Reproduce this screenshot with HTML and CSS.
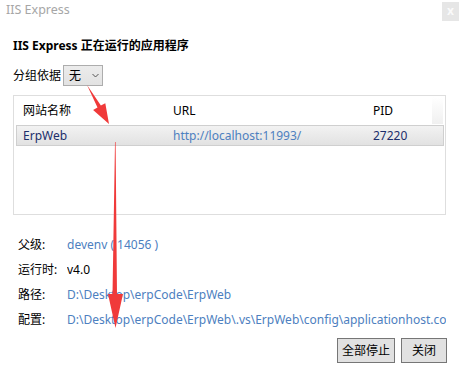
FILE: index.html
```html
<!DOCTYPE html>
<html>
<head>
<meta charset="utf-8">
<link rel="stylesheet" href="styles.css">
</head>
<body>
<div class="window">
  <div class="titlebar">
    <span class="title">IIS Express</span>
    <span class="close">x</span>
  </div>
  <div class="content">
    <h1 class="heading">IIS Express 正在运行的应用程序</h1>
    <div class="group-row">
      <span class="group-label">分组依据</span>
      <span class="select"><span class="select-value">无</span><svg class="chev" width="7" height="5" viewBox="0 0 7 5"><path d="M0.5 1 L3.5 4 L6.5 1" fill="none" stroke="#555" stroke-width="1"/></svg></span>
    </div>
    <div class="listbox">
      <div class="list-head">
        <span class="col col-name">网站名称</span>
        <span class="col col-url">URL</span>
        <span class="col col-pid">PID</span>
        <span class="head-filler"></span>
      </div>
      <div class="list-row selected">
        <span class="col col-name">ErpWeb</span>
        <span class="col col-url link">http://localhost:11993/</span>
        <span class="col col-pid">27220</span>
      </div>
    </div>
    <div class="info">
      <span class="label">父级:</span><span class="value link">devenv ( 14056 )</span>
      <span class="label">运行时:</span><span class="value">v4.0</span>
      <span class="label">路径:</span><span class="value link">D:\Desktop\erpCode\ErpWeb</span>
      <span class="label">配置:</span><span class="value link">D:\Desktop\erpCode\ErpWeb\.vs\ErpWeb\config\applicationhost.config</span>
    </div>
    <div class="buttons">
      <span class="btn btn-stop">全部停止</span>
      <span class="btn btn-close">关闭</span>
    </div>
  </div>
  <svg class="arrows" width="459" height="375" viewBox="0 0 459 375">
    <polygon points="87,85 100.9,105.6 105.3,103.2 109,124 93.1,110 97.5,107.6" fill="#f03a3a"/>
    <polygon points="115,142 115.6,142 117,294 123,294 115.5,328 108,294 112.5,294" fill="#f03a3a"/>
  </svg>
</div>
</body>
</html>
```

FILE: styles.css
```css
* { box-sizing: border-box; }
html, body { margin: 0; padding: 0; background: #ffffff; }
body {
  font-family: "Noto Sans", "Noto Sans CJK SC", sans-serif;
  font-size: 12px;
  color: #000;
}
.window {
  position: relative;
  width: 459px;
  height: 375px;
  overflow: hidden;
}
.titlebar {
  height: 22px;
  display: flex;
  align-items: flex-start;
  justify-content: space-between;
}
.title {
  margin: 1px 0 0 6px;
  font-size: 12.5px;
  line-height: 18px;
  color: #a6a6a6;
}
.close {
  margin-top: 2px;
  width: 17px;
  height: 19px;
  background: #e6e6e6;
  color: #fafafa;
  font-size: 12px;
  font-weight: bold;
  line-height: 18px;
  text-align: center;
}
.content {
  padding: 0 13px;
}
.heading {
  margin: 15px 0 0 0;
  font-size: 12px;
  font-weight: bold;
  line-height: 18px;
}
.group-row {
  margin-top: 10px;
  display: flex;
  align-items: center;
  height: 21px;
}
.group-label { line-height: 18px; }
.select {
  margin-left: 2px;
  width: 40px;
  height: 21px;
  border: 1px solid #adadad;
  background: linear-gradient(#ececec, #e2e2e2);
  display: flex;
  align-items: center;
  padding-left: 5px;
}
.select-value { line-height: 18px; }
.chev { margin-left: 11px; }
.listbox {
  margin-top: 9px;
  height: 120px;
  border: 1px solid #dedede;
  position: relative;
}
.list-head, .list-row {
  display: flex;
  align-items: center;
}
.list-head { height: 29px; position: relative; }
.head-filler {
  position: absolute;
  right: 2px;
  top: 1px;
  width: 11px;
  height: 27px;
  background: linear-gradient(#ffffff, #f0f0f0);
}
.list-row {
  margin: 0 1px 0 2px;
  height: 21px;
  border: 1px solid #cfcfcf;
  background: linear-gradient(#f2f2f2, #e2e2e2);
  color: #1c2e6b;
}
.col { line-height: 18px; white-space: nowrap; }
.col-name { width: 159px; padding-left: 9px; }
.list-row .col-name { width: 156px; padding-left: 6px; }
.col-url { width: 200px; }
.link { color: #4d80c0; }
.list-row .col-pid { color: #1c2e6b; }
.info {
  margin-top: 17px;
  padding-left: 5px;
  display: grid;
  grid-template-columns: 49px minmax(0, 1fr);
  grid-auto-rows: 25px;
  align-items: center;
  white-space: nowrap;
}
.label { line-height: 18px; }
.value { line-height: 18px; overflow: hidden; }
.buttons {
  margin-top: 6px;
  display: flex;
  justify-content: flex-end;
  gap: 6px;
  margin-right: -1px;
}
.btn {
  height: 25px;
  border: 1px solid #767676;
  background: #e1e1e1;
  display: flex;
  align-items: center;
  justify-content: center;
  line-height: 18px;
}
.btn-stop { width: 58px; }
.btn-close { width: 46px; }
.arrows {
  position: absolute;
  left: 0;
  top: 0;
  pointer-events: none;
}
```
